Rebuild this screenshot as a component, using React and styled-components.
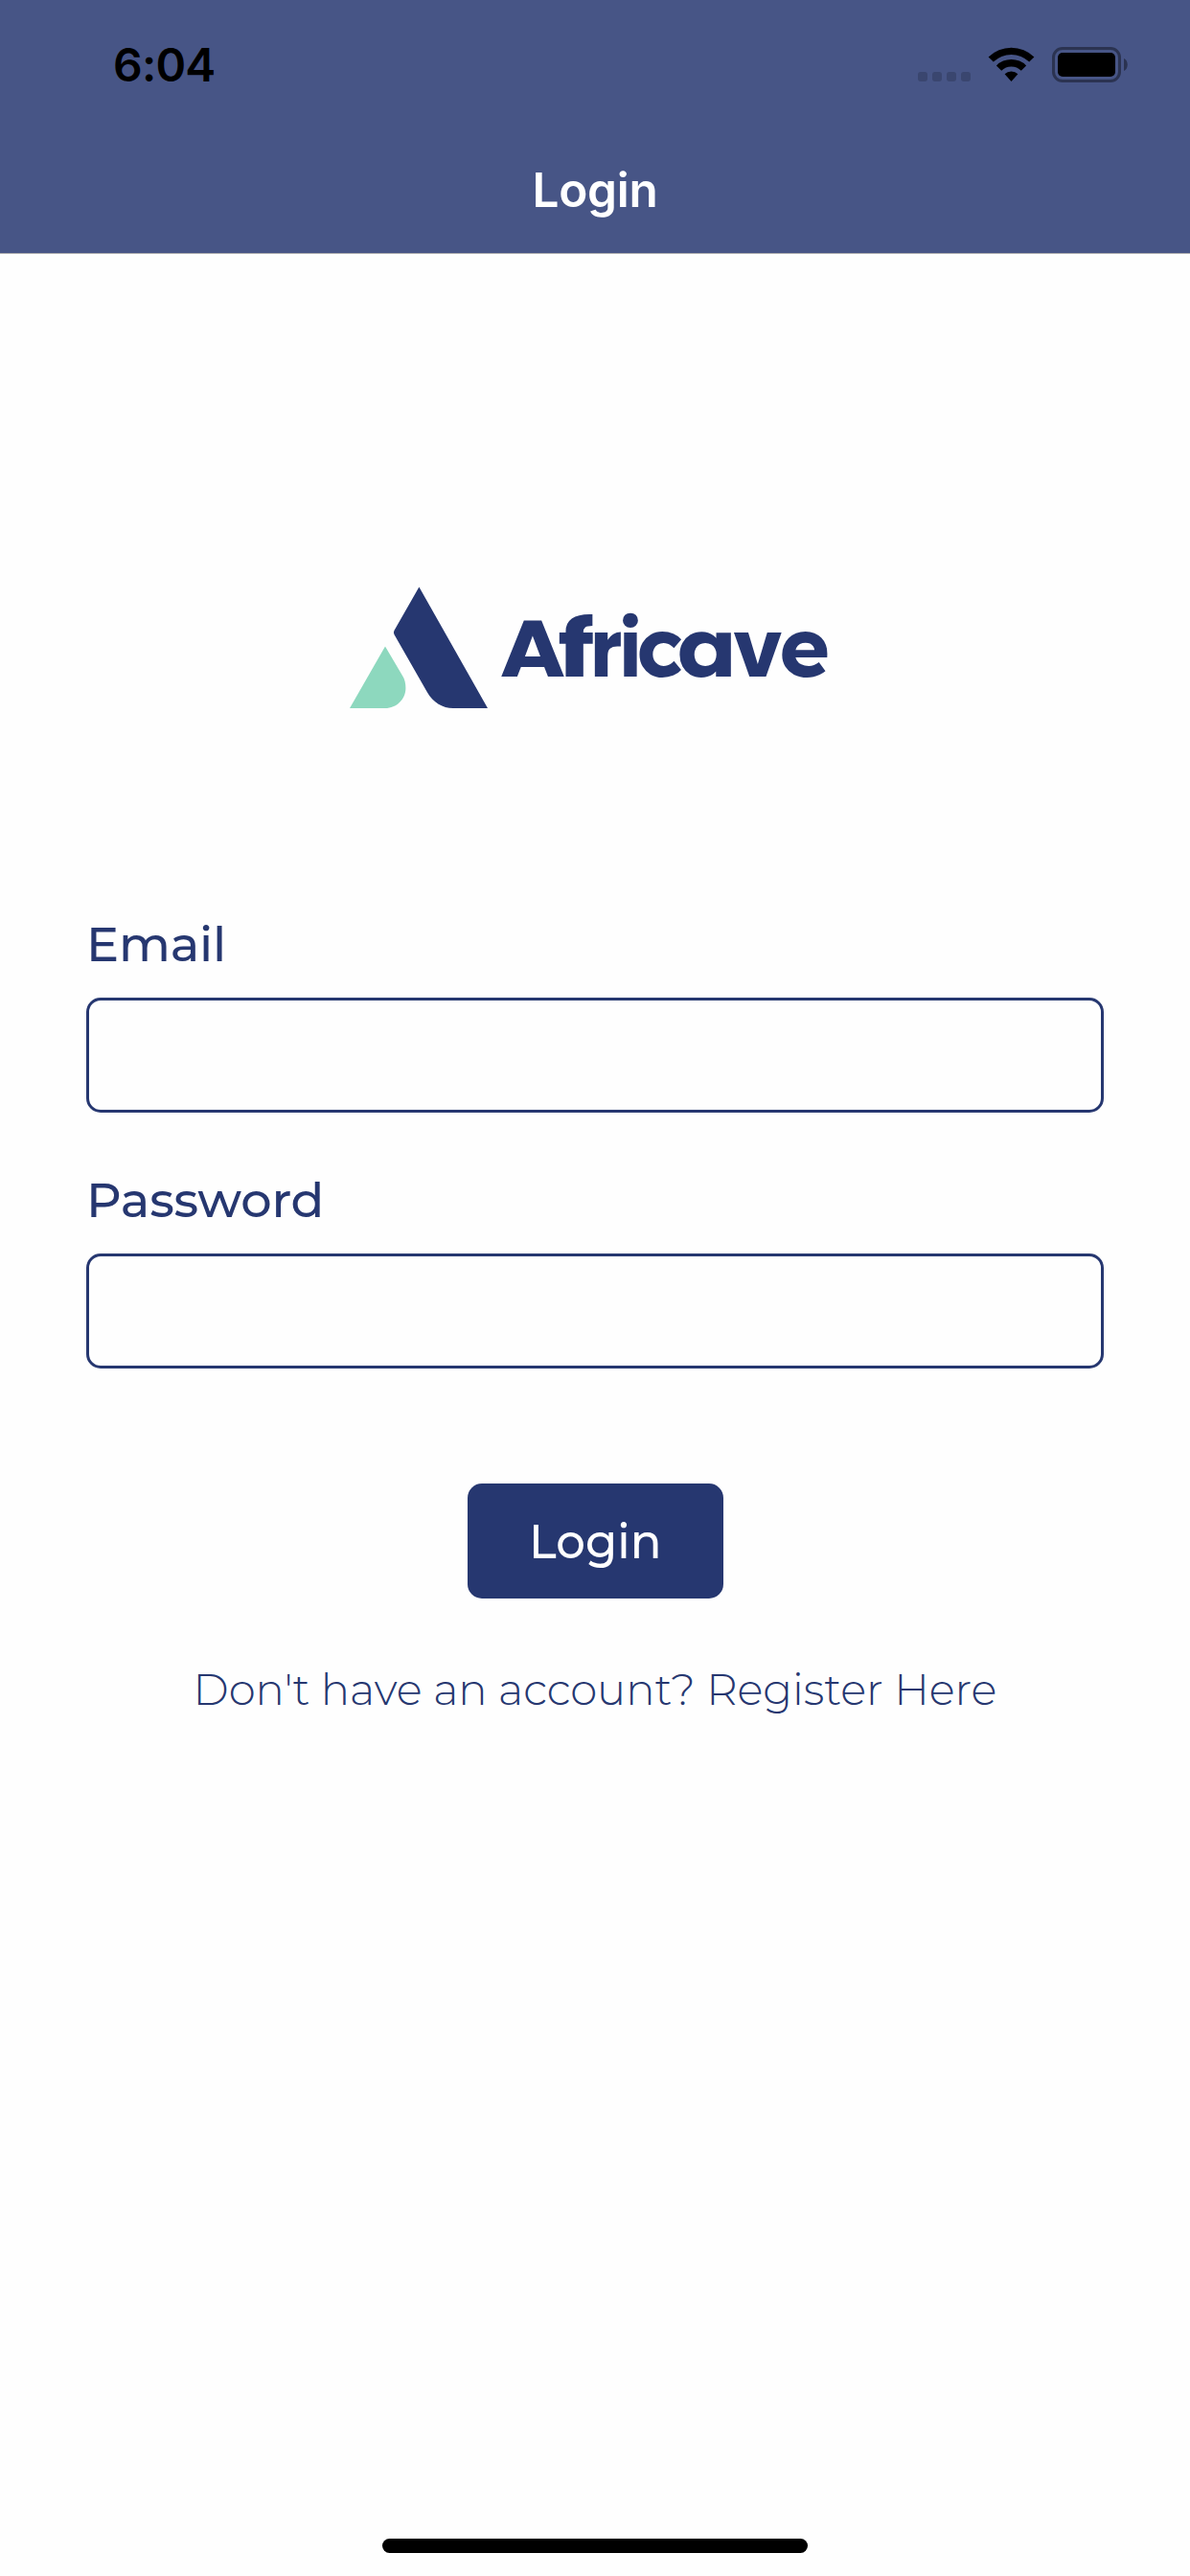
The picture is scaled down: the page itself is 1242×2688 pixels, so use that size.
import React from "react";
import styled, { createGlobalStyle } from "styled-components";

const navy = "#263770";
const bar = "#475586";

const GlobalStyle = createGlobalStyle`
  * { box-sizing: border-box; }
  html, body { margin: 0; background: #fefefe; }
`;

const Screen = styled.div`
  display: flex;
  flex-direction: column;
  width: 1242px;
  height: 2688px;
  background: #fefefe;
  color: ${navy};
  font-family: Montserrat, Inter, "Liberation Sans", sans-serif;
`;

const Header = styled.header`
  height: 265px;
  background: ${bar};
  border-bottom: 1px solid #b0b0b2;
  font-family: Inter, "Liberation Sans", sans-serif;
`;

const StatusBar = styled.div`
  display: flex;
  justify-content: space-between;
  align-items: center;
  height: 135px;
  padding: 0 65px 0 118px;
`;

const Time = styled.span`
  color: #000;
  font-size: 48px;
  font-weight: 600;
  letter-spacing: -0.8px;
  line-height: 60px;
`;

const NavBar = styled.div`
  display: flex;
  align-items: center;
  justify-content: center;
  height: 126px;
`;

const Title = styled.h1`
  margin: 0;
  color: #fff;
  font-size: 49.5px;
  font-weight: 600;
  line-height: 60px;
  letter-spacing: -0.3px;
`;

const Form = styled.form`
  display: flex;
  flex-direction: column;
  align-items: center;
  flex: 1;
  padding: 341px 90px 0;
`;

const Field = styled.label`
  display: flex;
  flex-direction: column;
  gap: 26px;
  width: 100%;
  margin-top: ${(p) => p.$top}px;
`;

const LabelText = styled.span`
  font-size: 51px;
  font-weight: 500;
  letter-spacing: -0.2px;
  line-height: 60px;
`;

const Input = styled.input`
  width: 100%;
  height: 120px;
  padding: 0 30px;
  border: 3px solid ${navy};
  border-radius: 15px;
  background: transparent;
  color: ${navy};
  font: inherit;
  font-size: 48px;
  outline: none;
`;

const Button = styled.button`
  width: 267px;
  height: 120px;
  margin-top: 120px;
  padding: 0;
  border: 0;
  border-radius: 15px;
  background: ${navy};
  color: #fff;
  font-family: inherit;
  font-size: 51px;
  font-weight: 480;
  line-height: 60px;
`;

const ButtonLabel = styled.span`
  display: inline-block;
  transform: scaleX(0.945);
`;

const RegisterLink = styled.a`
  margin-top: 65px;
  font-size: 45px;
  font-weight: 300;
  letter-spacing: -0.05px;
  line-height: 60px;
  white-space: nowrap;
`;

const Footer = styled.footer`
  display: flex;
  justify-content: center;
  padding-bottom: 24px;
`;

const HomeIndicator = styled.div`
  width: 444px;
  height: 15px;
  border-radius: 8px;
  background: #000;
`;

const Glyph = styled.text`
  fill: ${navy};
  font-family: ${(p) => (p.$round ? "Lexend, Poppins" : "Poppins, Lexend")}, Inter, sans-serif;
  font-size: ${(p) => (p.$round ? 86 : 82)}px;
  font-weight: 700;
`;

const StatusIcons = () => (
  <svg width="219" height="37" viewBox="958 49 219 37">
    <g fill="#3a466f">
      {[958, 973, 988, 1003].map((x) => (
        <rect key={x} x={x} y="75" width="10" height="10" rx="3" />
      ))}
    </g>
    <path d="M1031.6 59.6 A34 34 0 0 1 1079.4 59.6 L1074.2 64.6 A26.5 26.5 0 0 0 1036.8 64.6Z" />
    <path d="M1039.9 68.4 A22 22 0 0 1 1071.1 68.4 L1065.8 73.8 A14.6 14.6 0 0 0 1045.2 73.8Z" />
    <path d="M1048.6 77.2 A10 10 0 0 1 1062.4 77.2 L1055.5 85Z" />
    <rect x="1099.5" y="50.5" width="69" height="34" rx="9.5" fill="none" stroke="#2b3351" strokeWidth="3" />
    <rect x="1104" y="55" width="60" height="25" rx="5" />
    <path d="M1173 61 C1178 63 1178 72 1173 74Z" fill="#2b3351" />
  </svg>
);

const wordmark = [
  { char: "A", x: 521.8, stretch: 1.132 },
  { char: "f", x: 582.1, stretch: 1.308 },
  { char: "r", x: 616, stretch: 0.953 },
  { char: "i", x: 646.6, stretch: 0.948 },
  { char: "c", x: 664.5, stretch: 1.023, round: true },
  { char: "a", x: 706.3, stretch: 1.117, round: true },
  { char: "v", x: 765.3, stretch: 0.999 },
  { char: "e", x: 813.2, stretch: 1.051, round: true },
];

const Logo = () => (
  <svg width="546" height="150" viewBox="348 606 546 150" role="img" aria-label="Africave">
    <path
      fill="#8dd8be"
      d="M402 674.5 L365 739 H402 C414 739 423.4 729.5 423.4 718 C423.4 713 422.6 709 420 705Z"
    />
    <path
      fill={navy}
      d="M437.4 612.5 L411.4 658 Q410.4 660 411.4 662 L446 722.5 C452 733 462 739 473 739 H509Z"
    />
    <g>
      {wordmark.map(({ char, x, stretch, round }) => (
        <Glyph key={x} $round={round} transform={`translate(${x} 705.7) scale(${stretch} 1)`}>{char}</Glyph>
      ))}
    </g>
  </svg>
);

export default function App() {
  return (
    <Screen>
      <GlobalStyle />
      <Header>
        <StatusBar>
          <Time>6:04</Time>
          <StatusIcons />
        </StatusBar>
        <NavBar>
          <Title>Login</Title>
        </NavBar>
      </Header>
      <Form>
        <Logo />
        <Field $top={199}>
          <LabelText>Email</LabelText>
          <Input type="email" />
        </Field>
        <Field $top={61}>
          <LabelText>Password</LabelText>
          <Input type="password" />
        </Field>
        <Button type="button"><ButtonLabel>Login</ButtonLabel></Button>
        <RegisterLink>Don't have an account? Register Here</RegisterLink>
      </Form>
      <Footer>
        <HomeIndicator />
      </Footer>
    </Screen>
  );
}
